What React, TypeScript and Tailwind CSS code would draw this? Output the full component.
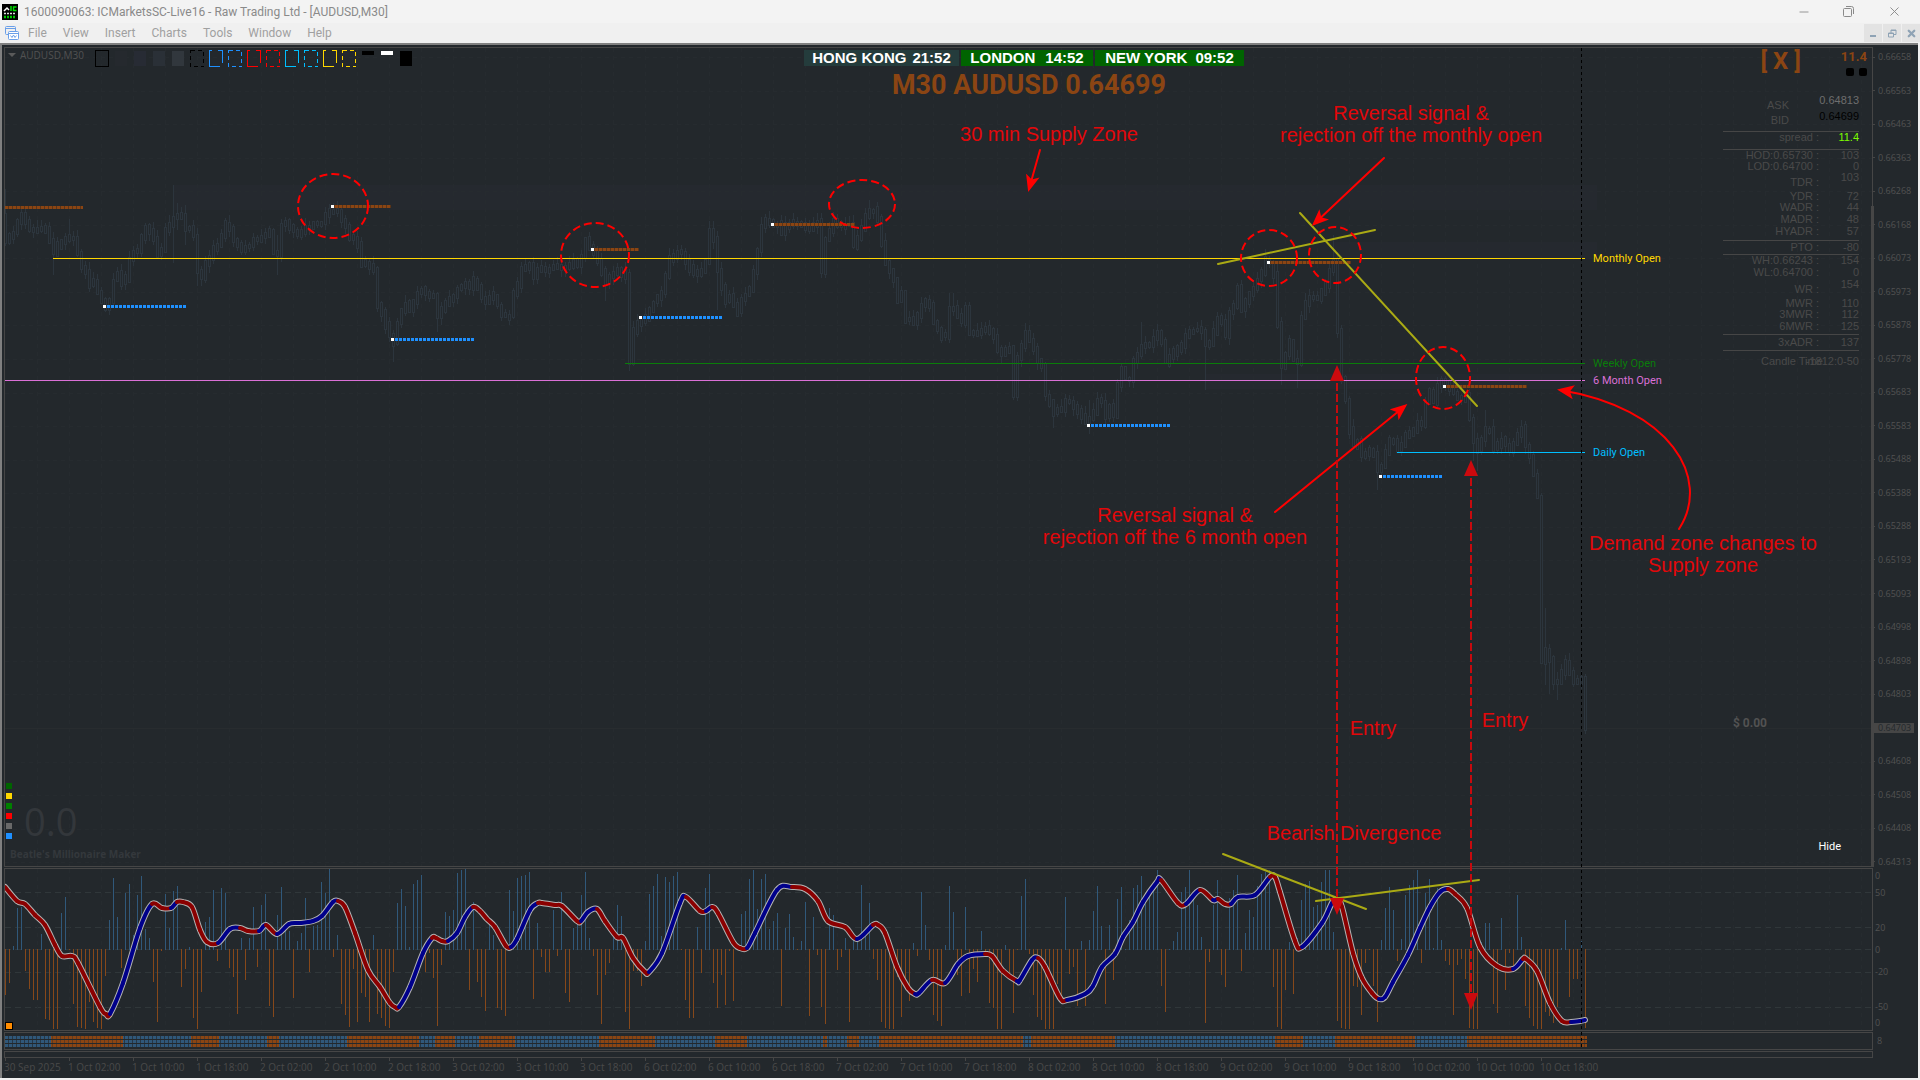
import { useState } from 'react';
import { Minus, X } from 'lucide-react';

const MENU = ['File', 'View', 'Insert', 'Charts', 'Tools', 'Window', 'Help'];

const PRICES = [
    '0.66658', '0.66563', '0.66463', '0.66363', '0.66268', '0.66168', '0.66073', '0.65973', '0.65878',
    '0.65778', '0.65683', '0.65583', '0.65488', '0.65388', '0.65288', '0.65193', '0.65093', '0.64998',
    '0.64898', '0.64803', '0.64703', '0.64608', '0.64508', '0.64408', '0.64313',
];

const DAYS = [1, 2, 3, 6, 7, 8, 9, 10];
const TIMES = ['30 Sep 2025', ...DAYS.flatMap((d) => ['02:00', '10:00', '18:00'].map((t) => `${d} Oct ${t}`))];

const SESSIONS = [
    { city: 'HONG KONG', time: '21:52', style: 'bg-[#243c3c] w-[155px] gap-1.5' },
    { city: 'LONDON', time: '14:52', style: 'bg-[#006400] w-[132px] gap-2.5' },
    { city: 'NEW YORK', time: '09:52', style: 'bg-[#006400] w-[149px] gap-2' },
];

type ToolKind = 'box' | 'fill' | 'dashed' | 'notch' | 'bar' | 'block';
const TOOLS: { name: string; kind: ToolKind; color: string }[] = [
    { name: 'Box', kind: 'box', color: '#000000' },
    { name: 'Zone 1', kind: 'fill', color: '#25292e' },
    { name: 'Zone 2', kind: 'fill', color: '#272b34' },
    { name: 'Zone 3', kind: 'fill', color: '#2a3037' },
    { name: 'Zone 4', kind: 'fill', color: '#31373d' },
    { name: 'Black dashed', kind: 'dashed', color: '#000000' },
    { name: 'Blue', kind: 'notch', color: '#1e90ff' },
    { name: 'Blue dashed', kind: 'dashed', color: '#1e90ff' },
    { name: 'Red', kind: 'notch', color: '#ff0000' },
    { name: 'Red dashed', kind: 'dashed', color: '#ff0000' },
    { name: 'Aqua', kind: 'notch', color: '#00bfff' },
    { name: 'Aqua dashed', kind: 'dashed', color: '#00bfff' },
    { name: 'Gold', kind: 'notch', color: '#ffd700' },
    { name: 'Gold dashed', kind: 'dashed', color: '#ffd700' },
    { name: 'Black line', kind: 'bar', color: '#000000' },
    { name: 'White line', kind: 'bar', color: '#ffffff' },
    { name: 'Black block', kind: 'block', color: '#000000' },
];

// label, value, row classes, label cell classes, value cell classes
const RANGES: [string, string, string, string, string][] = [
    ['ASK', '0.64813', 'h-4', 'align-bottom pr-[30px]', 'align-top text-[#6e6e6e]'],
    ['BID', '0.64699', 'h-5 border-b', 'align-middle pr-[30px]', 'align-top text-black'],
    ['spread :', '11.4', 'h-[18px] border-b', 'align-top', 'align-top text-[#7cfc00]'],
    ['HOD:0.65730 :', '103', 'h-[11px]', '', ''],
    ['LOD:0.64700 :', '0', 'h-[11px]', '', ''],
    ['TDR :', '103', 'h-4', 'align-bottom', 'align-top'],
    ['YDR :', '72', 'h-[14px]', 'align-bottom', 'align-bottom'],
    ['WADR :', '44', 'h-3', '', ''],
    ['MADR :', '48', 'h-3', '', ''],
    ['HYADR :', '57', 'h-[15px] border-b', 'align-top', 'align-top'],
    ['PTO :', '-80', 'h-[14px] border-b', '', ''],
    ['WH:0.66243 :', '154', 'h-3', '', ''],
    ['WL:0.64700 :', '0', 'h-3', '', ''],
    ['WR :', '154', 'h-4', 'align-bottom', 'align-top'],
    ['MWR :', '110', 'h-[14px]', 'align-bottom', 'align-bottom'],
    ['3MWR :', '112', 'h-3', '', ''],
    ['6MWR :', '125', 'h-[14px] border-b', 'align-top', 'align-top'],
    ['3xADR :', '137', 'h-4 border-b', 'align-middle', 'align-middle'],
];

// mid price path, one candle each 4px
const PATH: [number, number][] = [
    [5, 240], [9, 237], [13, 232], [17, 222], [21, 214], [25, 222], [29, 228], [37, 229], [45, 229], [49, 240],
    [53, 252], [57, 245], [61, 242], [65, 238], [73, 239], [77, 253], [81, 268], [85, 272], [89, 284], [93, 281],
    [97, 291], [101, 300], [105, 308], [109, 300], [113, 280], [117, 272], [121, 282], [125, 278], [129, 260],
    [133, 252], [137, 250], [141, 236], [145, 228], [149, 232], [153, 238], [157, 255], [161, 250], [165, 230],
    [169, 226], [173, 218], [177, 215], [181, 216], [185, 228], [189, 228], [193, 235], [197, 270], [201, 277],
    [205, 262], [209, 256], [213, 248], [217, 246], [221, 235], [225, 224], [229, 228], [233, 240], [241, 248],
    [249, 245], [253, 240], [261, 236], [269, 231], [273, 252], [277, 255], [281, 225], [285, 222], [293, 230],
    [297, 234], [305, 228], [313, 224], [321, 222], [325, 215], [329, 210], [333, 212], [337, 210], [341, 220],
    [345, 226], [349, 236], [353, 238], [357, 245], [361, 263], [365, 262], [373, 270], [377, 305], [381, 312],
    [385, 325], [389, 334], [393, 342], [397, 322], [401, 310], [405, 304], [409, 310], [413, 300], [417, 292],
    [421, 290], [429, 296], [433, 296], [437, 315], [441, 310], [445, 302], [453, 295], [457, 288], [461, 286],
    [465, 283], [469, 287], [473, 280], [477, 288], [481, 298], [485, 303], [489, 298], [493, 295], [497, 305],
    [501, 315], [509, 316], [513, 292], [517, 285], [521, 268], [529, 265], [533, 275], [537, 268], [545, 270],
    [557, 266], [565, 268], [573, 262], [577, 265], [581, 255], [585, 240], [589, 248], [593, 252], [597, 260],
    [601, 272], [605, 282], [609, 275], [617, 270], [625, 276], [629, 362], [633, 330], [637, 322], [641, 320],
    [645, 318], [649, 310], [653, 302], [661, 292], [665, 275], [669, 258], [673, 256], [677, 253], [681, 252],
    [685, 262], [689, 268], [693, 274], [701, 270], [705, 262], [709, 230], [713, 240], [717, 270], [721, 288],
    [725, 300], [729, 296], [733, 305], [737, 312], [741, 298], [749, 290], [753, 272], [757, 250], [761, 225],
    [765, 220], [769, 222], [773, 225], [777, 224], [781, 232], [785, 225], [793, 222], [801, 225], [809, 228],
    [817, 222], [821, 270], [825, 240], [829, 230], [833, 222], [841, 225], [849, 225], [853, 245], [857, 238],
    [861, 228], [865, 215], [869, 212], [873, 210], [877, 218], [881, 243], [885, 262], [889, 270], [893, 280],
    [897, 300], [901, 292], [905, 320], [909, 318], [913, 322], [917, 316], [921, 305], [925, 302], [929, 305],
    [933, 322], [941, 336], [945, 335], [949, 308], [953, 308], [957, 315], [961, 322], [965, 308], [969, 332],
    [973, 332], [981, 330], [985, 328], [989, 332], [993, 337], [997, 350], [1001, 354], [1005, 350],
    [1009, 348], [1013, 395], [1017, 356], [1021, 347], [1025, 334], [1029, 340], [1033, 348], [1037, 360],
    [1041, 366], [1045, 395], [1049, 402], [1053, 412], [1061, 410], [1065, 400], [1069, 402], [1077, 411],
    [1085, 420], [1089, 418], [1093, 412], [1097, 400], [1101, 402], [1105, 416], [1109, 406], [1113, 416],
    [1117, 384], [1121, 368], [1125, 378], [1129, 380], [1133, 360], [1137, 354], [1141, 346], [1149, 345],
    [1157, 332], [1161, 342], [1165, 362], [1173, 352], [1181, 345], [1185, 335], [1193, 330], [1201, 330],
    [1205, 345], [1209, 342], [1213, 332], [1217, 318], [1221, 322], [1225, 335], [1229, 312], [1233, 305],
    [1237, 288], [1241, 308], [1245, 300], [1253, 288], [1257, 280], [1261, 272], [1265, 260], [1269, 262],
    [1273, 275], [1277, 325], [1281, 365], [1285, 355], [1289, 342], [1293, 360], [1297, 362], [1301, 318],
    [1305, 302], [1309, 298], [1317, 298], [1325, 285], [1329, 270], [1333, 262], [1337, 330], [1341, 380],
    [1345, 400], [1349, 430], [1353, 445], [1357, 442], [1361, 455], [1365, 455], [1369, 450], [1373, 455],
    [1377, 470], [1381, 466], [1385, 452], [1389, 440], [1393, 440], [1397, 450], [1401, 445], [1405, 435],
    [1413, 430], [1417, 422], [1421, 425], [1425, 402], [1429, 392], [1433, 402], [1437, 385], [1441, 380],
    [1449, 388], [1453, 392], [1457, 398], [1461, 398], [1465, 395], [1469, 418], [1473, 442], [1477, 450],
    [1481, 440], [1485, 430], [1489, 430], [1493, 448], [1501, 440], [1509, 450], [1517, 436], [1521, 428],
    [1525, 445], [1529, 455], [1533, 475], [1537, 496], [1541, 662], [1545, 650], [1549, 660], [1553, 682],
    [1557, 682], [1561, 672], [1565, 662], [1573, 682], [1577, 680], [1581, 678], [1585, 728],
];

const LONG_WICKS: [number, number, number][] = [
    [5, 189, 245], [53, 240, 275], [69, 219, 240], [173, 185, 263], [177, 203, 230], [185, 205, 245],
    [197, 250, 286], [277, 235, 275], [393, 340, 362], [437, 310, 332], [605, 280, 301], [629, 324, 371],
    [713, 221, 240], [717, 265, 310], [869, 200, 220], [949, 293, 310], [953, 293, 310], [1053, 400, 428],
    [1089, 400, 434], [1141, 322, 350], [1205, 330, 390], [1281, 340, 385], [1297, 350, 388],
    [1333, 235, 275], [1377, 465, 490], [1473, 440, 461], [1477, 450, 471], [1485, 410, 430],
    [1545, 608, 685], [1549, 644, 694], [1557, 675, 700],
];

const FRACTALS = [
    { x1: 5, x2: 83, y: 207, up: false, start: false },
    { x1: 103, x2: 186, y: 306, up: true, start: true },
    { x1: 331, x2: 391, y: 206, up: false, start: true },
    { x1: 391, x2: 474, y: 339, up: true, start: true },
    { x1: 591, x2: 639, y: 249, up: false, start: true },
    { x1: 639, x2: 722, y: 317, up: true, start: true },
    { x1: 771, x2: 855, y: 224, up: false, start: true },
    { x1: 1087, x2: 1170, y: 425, up: true, start: true },
    { x1: 1267, x2: 1351, y: 262, up: false, start: true },
    { x1: 1379, x2: 1442, y: 476, up: true, start: true },
    { x1: 1443, x2: 1527, y: 386, up: false, start: true },
];

const LEVELS = [
    { label: 'Monthly Open', x: 53, y: 258, color: '#ffd700' },
    { label: 'Weekly Open', x: 625, y: 363, color: '#0a7d0a' },
    { label: '6 Month Open', x: 5, y: 380, color: '#da70d6' },
    { label: 'Daily Open', x: 1397, y: 452, color: '#00bfff' },
];

const HISTOGRAM = [
    -46, -34, 4, 42, 43, -22, -40, -51, -51, 16, -70, -71, -80, -80, 37, 53, -1, -55, -78, -79, -80, -53, -73, -79,
    -80, -27, 30, 72, 33, -19, 57, 66, 15, 55, 74, 21, 12, -33, -73, -2, 56, 22, 59, 64, -38, -20, 3, -69, -80, -43,
    28, 33, 60, -12, 62, 57, -19, -28, -65, 12, -31, 12, 43, -18, 45, 56, -57, -68, 35, 63, 21, 19, -49, 9, 17, 52,
    -23, 24, 25, 68, 57, 81, -8, 15, -55, -66, -78, -20, -73, -44, -48, -73, 15, -65, -69, -77, -79, -23, 47, 61,
    44, 3, 66, 70, 75, -23, -4, -29, -77, -16, 38, 34, 40, 77, 80, 81, -41, 48, -33,
    -48, -62, 31, 15, -59, -61, -67, 60, 39, 72, 74, 75, 78, -50, 27, -8, -23, -23, 40, -7, 58, -44, -53, 22, 27,
    55, 78, 12, -7, -46, -75, -26, -14, 16, 45, 34, -63, -80, -22, -22, -37, 9, 56, 64, 76, 14, 73, 68, 74, 78, -1,
    -51, -69, -69, 23, -24, 62, 76, -34, -59, -26, -56, -2, -52, 3, 36, 39, 71, 80, 41, 71, 76, 21, 29, 37, -57, 22,
    36, 13, -1, 9, 48, -67, 33, -6, -58, -75, 42, 35, -21, -8, 12, -73, 13, 11, 65, 18, 47, -10, -31, -73, -79, -80,
    -80, -28, -68, -36, -52, 7, -7, 58, 25, -11, -66, -72, -77, 5, 64, 38, -26,
    -47, 43, -44, -20, -33, 19, -5, -54, -59, -80, -80, 5, -29, -64, -1, 54, 71, -5, -46, -68, -71, -80, -80, -80,
    -35, -47, 53, -25, -18, -57, 9, -57, 10, 39, 64, 24, -55, 25, -31, 51, 63, 1, 30, 62, 65, 74, 50, 55, 60, 80,
    -37, -63, 1, 9, 18, 58, 63, 80, 50, 45, 13, -74, -13, 45, 70, -26, -38, 52, 60, 75, -22, 17, 40, 33, 64, 76, 78,
    80, -38, -78, -80, -41, 8, -45, 12, 50, 66, 69, 43, 45, 68, 80, 80, 18, -72, -79, -80, -80, -37, -38, -66, -14,
    -1, -37, -73, 10, 42, 63, 40, -12, 11, 55, 65, 70, 80, -14, 57, 71, 2, 62,
    10, -12, -16, -66, -16, -10, -30, -79, -80, -80, 8, 27, 27, -55, -64, 32, -41, -4, -19, 55, 13, -57, -69, -77,
    -80, -80, -63, -67, -74, -58, 2, 30, -48, -30, -30, 9, -79,
];

const WAVE: [number, number][] = [
    [5, 887], [17, 901], [25, 904], [35, 915], [45, 925], [55, 945], [62, 956], [72, 956], [78, 963], [100, 1007],
    [106, 1014], [110, 1014], [123, 983], [140, 928], [152, 904], [162, 908], [171, 908], [177, 902], [183, 902],
    [192, 907], [200, 930], [207, 942], [218, 943], [230, 929], [240, 928], [248, 931], [259, 931], [266, 925],
    [277, 934], [289, 924], [300, 923], [313, 921], [322, 916], [333, 902], [338, 901], [345, 907], [355, 933],
    [368, 970], [380, 987], [390, 1003], [395, 1007], [399, 1007], [410, 987], [423, 953], [432, 938], [436, 938],
    [442, 941], [448, 941], [457, 933], [465, 917], [473, 907], [480, 911], [487, 919], [495, 927], [506, 946],
    [511, 947], [517, 939], [530, 910], [538, 903], [542, 903], [555, 905], [562, 906], [577, 921], [581, 921],
    [588, 912], [597, 909], [605, 921], [617, 937], [623, 938], [633, 958], [645, 972], [649, 972], [662, 953],
    [680, 903], [686, 897], [700, 911], [706, 911], [712, 907], [718, 913], [733, 942], [740, 948], [747, 948],
    [755, 933], [777, 890], [792, 887], [805, 889], [818, 901], [828, 921], [845, 927], [857, 939], [873, 925],
    [878, 925], [885, 933], [897, 967], [908, 988], [915, 994], [919, 993], [932, 980], [945, 983], [958, 964],
    [968, 956], [985, 954], [992, 956], [1003, 971], [1017, 981], [1020, 980], [1032, 960], [1038, 958],
    [1045, 967], [1060, 998], [1067, 1000], [1085, 994], [1093, 986], [1102, 967], [1115, 954], [1123, 937],
    [1133, 922], [1143, 902], [1157, 882], [1161, 880], [1178, 903], [1186, 904], [1200, 890], [1213, 900],
    [1218, 899], [1225, 904], [1231, 904], [1238, 897], [1255, 895], [1270, 877], [1275, 877], [1280, 892],
    [1295, 941], [1302, 947], [1322, 923], [1332, 903], [1337, 900], [1342, 907], [1353, 953], [1362, 978],
    [1372, 993], [1379, 999], [1385, 997], [1393, 982], [1408, 955], [1420, 928], [1430, 907], [1440, 892],
    [1448, 889], [1455, 894], [1467, 908], [1480, 947], [1497, 966], [1513, 969], [1523, 959], [1526, 959],
    [1537, 971], [1550, 1003], [1562, 1021], [1571, 1022], [1580, 1021], [1585, 1020],
];

const BEAR_RUNS: [number, number][] = [
    [51, 123], [191, 219], [267, 279], [347, 419], [435, 455], [479, 515], [599, 655], [715, 747], [823, 827],
    [847, 859], [879, 1023], [1031, 1115], [1275, 1303], [1335, 1415], [1467, 1587],
];

const CIRCLES = [
    [333, 206, 35, 32], [595, 255, 34, 32], [862, 204, 33, 24], [1269, 258, 28, 28], [1335, 255, 26, 28], [1443, 378, 27, 31],
];

const OSC_LABELS = [
    { text: '0', top: 3 }, { text: '50', top: 20 }, { text: '20', top: 55 }, { text: '0', top: 77 },
    { text: '-20', top: 99 }, { text: '-50', top: 134 }, { text: '0', top: 150 },
];

const SWATCHES = ['bg-[#006400]', 'bg-[#ffd700]', 'bg-[#008000]', 'bg-[#ff0000]', 'bg-[#696969]', 'bg-[#1e90ff]'];

const GRID_X = Array.from({ length: 58 }, (_, i) => 37 + i * 32);

function priceAt(x: number) {
    const i = PATH.findIndex((p) => p[0] >= x);
    if (i <= 0) return PATH[0][1];
    const [x0, y0] = PATH[i - 1];
    const [x1, y1] = PATH[i];
    return y0 + ((y1 - y0) * (x - x0)) / (x1 - x0);
}

// small repeatable noise so the candles keep their shape between renders
function noise(n: number) {
    const v = Math.sin(n * 12.9898) * 43758.5453;
    return v - Math.floor(v);
}

const CANDLES = Array.from({ length: 396 }, (_, i) => {
    const x = 5 + i * 4;
    const open = i === 0 ? 214 : priceAt(x - 4);
    const close = priceAt(x);
    const top = Math.round(Math.min(open, close) - noise(i) * 3 - 1);
    const bottom = Math.round(Math.max(open, close) + noise(i + 500) * 3 + 1);
    return { x, top, bottom, high: top - Math.round(noise(i + 900) * 7), low: bottom + Math.round(noise(i + 1300) * 7) };
});

function waveSegment(i: number) {
    const p0 = WAVE[Math.max(i - 1, 0)];
    const p1 = WAVE[i];
    const p2 = WAVE[i + 1];
    const p3 = WAVE[Math.min(i + 2, WAVE.length - 1)];
    const c1 = [p1[0] + (p2[0] - p0[0]) / 6, p1[1] + (p2[1] - p0[1]) / 6];
    const c2 = [p2[0] - (p3[0] - p1[0]) / 6, p2[1] - (p3[1] - p1[1]) / 6];
    return `M${p1[0]} ${p1[1]}C${c1[0]} ${c1[1]} ${c2[0]} ${c2[1]} ${p2[0]} ${p2[1]}`;
}

const WAVE_SEGMENTS = WAVE.slice(0, -1).map((p, i) => ({ d: waveSegment(i), falling: WAVE[i + 1][1] >= p[1] }));

function ToolIcon({ kind, color }: { kind: ToolKind; color: string }) {
    return (
        <svg className="block" width="14" height="17" fill="none" stroke={color} shapeRendering="crispEdges">
            {kind === 'box' && <rect x="0.5" y="0.5" width="13" height="16" />}
            {kind === 'dashed' && <rect x="0.5" y="0.5" width="13" height="16" strokeDasharray="4 3" />}
            {kind === 'notch' && <path d="M3 .5H.5V16.5H11M9 .5H13.5V13" />}
            {kind === 'fill' && <rect x="1" y="1" width="12" height="15" fill={color} stroke="none" />}
            {kind === 'bar' && <rect x="1" y="1" width="12" height="4" fill={color} stroke="none" />}
            {kind === 'block' && <rect x="1" y="1" width="12" height="15" fill={color} stroke="none" />}
        </svg>
    );
}

function TitleBar() {
    return (
        <header className="flex h-[23px] items-center bg-[#f3f3f3] pl-0.5 text-[#8a8a8a]">
            <svg width="16" height="16" className="mr-1.5">
                <rect width="16" height="16" fill="#000" />
                <path d="M2 7l3-3 2 2" stroke="#fff" strokeWidth="1.5" fill="none" />
                <path d="M9 2v5M14.500 3h-3v3.500h3" stroke="#00e000" strokeWidth="1.5" fill="none" />
                <path d="M2 9.500h12" stroke="#ddd" strokeWidth="1.5" strokeDasharray="2 1" />
                <path d="M2 13h12" stroke="#00c800" strokeWidth="2.500" strokeDasharray="2 1" />
            </svg>
            <h1 className="font-['Roboto',sans-serif] text-[12px]">1600090063: ICMarketsSC-Live16 - Raw Trading Ltd - [AUDUSD,M30]</h1>
            <div className="ml-auto flex items-center pr-[3px]">
                <button type="button" aria-label="Minimize" className="flex w-[45px] justify-center">
                    <Minus size={14} strokeWidth={1.5} />
                </button>
                <button type="button" aria-label="Restore" className="flex w-[45px] justify-center">
                    <svg width="11" height="11" fill="none" stroke="currentColor">
                        <rect x="0.5" y="2.5" width="8" height="8" rx="1" />
                        <path d="M3 .5h5.500a2 2 0 0 1 2 2V8" />
                    </svg>
                </button>
                <button type="button" aria-label="Close" className="flex w-[46px] justify-center">
                    <X size={15} strokeWidth={1.5} />
                </button>
            </div>
        </header>
    );
}

function MenuBar() {
    return (
        <nav className="flex h-5 items-center bg-[#f0f0f0] pl-1 font-['Roboto',sans-serif] text-[12px] text-[#a0a0a0]">
            <svg width="16" height="16" className="mr-1.5" fill="none" stroke="#6a9fe8">
                <rect x="1.5" y="1.5" width="10" height="8" rx="1" />
                <path d="M1.500 3.500h10" />
                <rect x="4.500" y="6.500" width="10" height="8" rx="1" fill="#fff" />
                <path d="M4.500 8.500h10M6.500 10.500l1.500 2 1.500-2.500 1.500 2.500 1.500-2" />
            </svg>
            {MENU.map((item) => (
                <button key={item} type="button" className="mr-3 px-0.5">
                    {item}
                </button>
            ))}
            <div className="ml-auto flex gap-px text-[#8fa3b5]">
                <button type="button" aria-label="Minimize chart" className="flex h-[18px] w-[18px] items-center justify-center bg-[#e3e3e3]">
                    <svg width="8" height="8">
                        <path d="M1 7h6" stroke="currentColor" strokeWidth="2" />
                    </svg>
                </button>
                <button type="button" aria-label="Restore chart" className="flex h-[18px] w-[18px] items-center justify-center bg-[#e3e3e3]">
                    <svg width="9" height="9" fill="none" stroke="currentColor">
                        <path d="M.5 4h5v4h-5zM3 4V1h5v4.500H6M.5 4.500h5M3 1.500h5" />
                    </svg>
                </button>
                <button type="button" aria-label="Close chart" className="flex h-[18px] w-[18px] items-center justify-center bg-[#e3e3e3]">
                    <X size={11} strokeWidth={5} />
                </button>
            </div>
        </nav>
    );
}

function PriceChart() {
    return (
        <svg className="absolute inset-0 h-full w-full" shapeRendering="crispEdges" aria-label="AUDUSD M30 price">
            <g transform="translate(-5 -48)">
                <rect x="173" y="185" width="1424" height="25" fill="#25292f" />
                <rect x="1333" y="242" width="264" height="17" fill="#25292f" />
                <rect x="1205" y="374" width="392" height="15" fill="#25292f" />
                <g stroke="#262b2f" strokeDasharray="4 4">
                    {GRID_X.map((x) => (
                        <path key={x} d={`M${x}.5 48V866`} />
                    ))}
                    {PRICES.map((p, i) => (
                        <path key={p} d={`M5 ${Math.round(57 + i * 33.55)}.5H1872`} />
                    ))}
                </g>
                <path d="M5 728.500H1872" stroke="#282c2f" />
                <g stroke="#2c353d" fill="#23282c">
                    {LONG_WICKS.map(([x, y1, y2]) => (
                        <path key={x} d={`M${x}.5 ${y1}V${y2}`} />
                    ))}
                    {CANDLES.map((c) => (
                        <g key={c.x}>
                            <path d={`M${c.x}.5 ${c.high}V${c.low}`} />
                            <rect x={c.x - 0.5} y={c.top + 0.5} width="2" height={c.bottom - c.top} />
                        </g>
                    ))}
                </g>
                {FRACTALS.map((f) => (
                    <g key={f.x1} strokeWidth="3">
                        {!f.up && <path d={`M${f.x1} ${f.y}.5H${f.x2}`} stroke="#5a3418" />}
                        <path d={`M${f.x1} ${f.y}.5H${f.x2}`} stroke={f.up ? '#1e90ff' : '#8b4513'} strokeDasharray="3 1" />
                        {f.start && <path d={`M${f.x1} ${f.y}.5h3`} stroke="#ffffff" />}
                    </g>
                ))}
                {LEVELS.map((l) => (
                    <g key={l.label}>
                        <path d={`M${l.x} ${l.y}.5H1585`} stroke={l.color} />
                        <text x="1593" y={l.y + 4} fill={l.color} className="font-['Roboto',sans-serif] text-[11px]">
                            {l.label}
                        </text>
                    </g>
                ))}
            </g>
        </svg>
    );
}

function Oscillator() {
    return (
        <svg className="absolute inset-0 h-full w-full" aria-label="Oscillator">
            <g transform="translate(-5 -869)">
                <g stroke="#30373a" strokeDasharray="6 4" shapeRendering="crispEdges">
                    {[892, 927, 949, 972, 1007].map((y) => (
                        <path key={y} d={`M5 ${y}.5H1872`} />
                    ))}
                </g>
                <g stroke="#262b2f" strokeDasharray="4 4" shapeRendering="crispEdges">
                    {GRID_X.map((x) => (
                        <path key={x} d={`M${x}.5 869V1030`} />
                    ))}
                </g>
                <g shapeRendering="crispEdges">
                    {HISTOGRAM.map((v, i) => (
                        <path key={i} d={`M${5 + i * 4}.5 ${v > 0 ? 950 : 949}v${-v}`} stroke={v > 0 ? '#30587a' : '#86481a'} />
                    ))}
                </g>
                <path d={WAVE_SEGMENTS.map((s) => s.d).join('')} fill="none" stroke="#b4b4b4" strokeWidth="6" strokeLinecap="round" />
                <g fill="none" strokeWidth="4" strokeLinecap="round">
                    {WAVE_SEGMENTS.map((s) => (
                        <path key={s.d} d={s.d} stroke={s.falling ? '#8b0000' : '#00008b'} />
                    ))}
                </g>
            </g>
        </svg>
    );
}

function TrendStrip() {
    return (
        <svg className="absolute inset-0 h-full w-full" shapeRendering="crispEdges" aria-label="Trend strip">
            <g transform="translate(-5 -1033)">
                {[1037, 1041, 1045].map((y) => (
                    <g key={y} strokeWidth="3">
                        <path d={`M5 ${y}.5H1587`} stroke="#30587a" />
                        {BEAR_RUNS.map(([a, b]) => (
                            <path key={a} d={`M${a} ${y}.5H${b}`} stroke="#8b4513" />
                        ))}
                        <path d={`M8 ${y}.5H1587`} stroke="#263746" strokeDasharray="1 3" />
                        {BEAR_RUNS.map(([a, b]) => (
                            <path key={a} d={`M${a + 1} ${y}.5H${b}`} stroke="#5e3a20" strokeDasharray="1 3" />
                        ))}
                    </g>
                ))}
            </g>
        </svg>
    );
}

function Annotations() {
    return (
        <svg className="pointer-events-none absolute inset-0 h-full w-full">
            <defs>
                <marker id="barb" markerUnits="userSpaceOnUse" markerWidth="18" markerHeight="14" refX="14" refY="7" orient="auto">
                    <path d="M0 0L17 7L0 14L4 7Z" fill="#ff0000" />
                </marker>
            </defs>
            <g transform="translate(-2 -45)" fill="none">
                <path d="M1581.500 48V1047" stroke="#000" strokeDasharray="3 3" shapeRendering="crispEdges" />
                <g stroke="#aaaa14" strokeWidth="2" strokeLinecap="round">
                    <path d="M1218 264L1375 230M1300 213L1477 406M1223 854L1366 909M1316 901L1479 880" />
                </g>
                <g stroke="#ff0000" strokeWidth="2" strokeDasharray="8 4">
                    {CIRCLES.map(([cx, cy, rx, ry]) => (
                        <ellipse key={cx} cx={cx} cy={cy} rx={rx} ry={ry} />
                    ))}
                </g>
                <g stroke="#ff0000" strokeWidth="2" strokeLinecap="round">
                    <path d="M1040 150L1029 189" markerEnd="url(#barb)" />
                    <path d="M1384 158L1314 224" markerEnd="url(#barb)" />
                    <path d="M1275 512L1405 406" markerEnd="url(#barb)" />
                    <path d="M1679 529C1712 478 1670 408 1560 390" markerEnd="url(#barb)" />
                </g>
                <g stroke="#c80a0e" strokeWidth="2" strokeDasharray="8 3">
                    <path d="M1337 383V898M1471 478V993" />
                </g>
                <g fill="#cc0a0e">
                    <path d="M1337 365l7 16h-14zM1337 915l7-17h-14zM1471 460l7 16h-14zM1471 1010l7-17h-14z" />
                </g>
                <g fill="#e2070a" textAnchor="middle" className="font-['Liberation_Sans',sans-serif] text-[20px]">
                    <text x="1049" y="141">30 min Supply Zone</text>
                    <text x="1411" y="120">Reversal signal &amp;</text>
                    <text x="1411" y="142">rejection off the monthly open</text>
                    <text x="1175" y="522">Reversal signal &amp;</text>
                    <text x="1175" y="544">rejection off the 6 month open</text>
                    <text x="1703" y="550">Demand zone changes to</text>
                    <text x="1703" y="572">Supply zone</text>
                    <text x="1373" y="735">Entry</text>
                    <text x="1505" y="727">Entry</text>
                    <text x="1354" y="840">Bearish Divergence</text>
                </g>
            </g>
        </svg>
    );
}

function RangePanel() {
    return (
        <div className="absolute top-[47px] right-[13px] w-[136px] font-['Liberation_Sans',sans-serif] text-[11px] text-[#4a4a4a]">
            <table className="w-full border-collapse leading-[11px]">
                <tbody>
                    {RANGES.map(([label, value, row, labelCell, valueCell]) => (
                        <tr key={label} className={`border-[#464646] ${row}`}>
                            <th scope="row" className={`p-0 text-right font-normal whitespace-nowrap ${labelCell}`}>{label}</th>
                            <td className={`w-10 p-0 text-right ${valueCell}`}>{value}</td>
                        </tr>
                    ))}
                </tbody>
            </table>
            <p className="relative mt-1 pl-[38px] leading-3 whitespace-nowrap">
                Candle Time
                <span className="absolute right-0">-1812:0-50</span>
            </p>
        </div>
    );
}

function Pane({ className, children, axis }: { className: string; children?: React.ReactNode; axis?: React.ReactNode }) {
    return (
        <div className={`flex ${className}`}>
            <div className="relative min-w-0 flex-1 overflow-hidden border border-[#464646]">{children}</div>
            <div className="relative flex w-[45px] shrink-0 flex-col">{axis}</div>
        </div>
    );
}

export default function App() {
    const [panelOpen, setPanelOpen] = useState(true);

    return (
        <div className="flex min-h-screen flex-col bg-[#f0f0f0] font-['Open_Sans','Noto_Sans',sans-serif]">
            <TitleBar />
            <MenuBar />

            <main className="relative mr-0.5 mb-0.5 flex flex-1 flex-col gap-px border-t-2 border-l-2 border-[#808080] bg-[#23282c] pt-0.5 pl-0.5 text-[9px] text-[#525252]">
                <Pane
                    className="min-h-[500px] flex-1"
                    axis={
                        <>
                            <div className="absolute top-[159px] bottom-0 -left-[2px] w-[3px] bg-[#464646]" />
                            <ul className="flex flex-1 flex-col justify-between pt-[5px] leading-[10px]">
                                {PRICES.map((p) => (
                                    <li key={p} className={`flex items-center gap-[3px] ${p === '0.64703' ? 'mr-1 bg-[#464646] text-[#23282c]' : ''}`}>
                                        <span className="h-px w-0.5 bg-[#464646]" />
                                        {p}
                                    </li>
                                ))}
                            </ul>
                        </>
                    }
                >
                    <PriceChart />
                    <div className="absolute top-0.5 left-[3px] flex items-start">
                        <div className="flex w-[87px] items-center gap-1 text-[10px] leading-[10px]">
                            <svg width="8" height="4">
                                <path d="M0 0h8L4 4z" fill="#5a5a5a" />
                            </svg>
                            AUDUSD,M30
                        </div>
                        <div className="flex gap-[5px]">
                            {TOOLS.map((t) => (
                                <button key={t.name} type="button" aria-label={t.name}>
                                    <ToolIcon kind={t.kind} color={t.color} />
                                </button>
                            ))}
                        </div>
                    </div>

                    {/* session clocks and the symbol headline */}
                    <div className="absolute top-0.5 left-[799px] flex flex-col items-center font-bold">
                        <ul className="flex gap-0.5 font-['Liberation_Sans',sans-serif] text-[15px] leading-4 text-white">
                            {SESSIONS.map((s) => (
                                <li key={s.city} className={`flex justify-center ${s.style}`}>
                                    <span>{s.city}</span>
                                    <time>{s.time}</time>
                                </li>
                            ))}
                        </ul>
                        <h2 className="mt-[3px] pl-2.5 font-['Roboto',sans-serif] text-[27px] leading-8 text-[#8b4513]">M30 AUDUSD 0.64699</h2>
                    </div>

                    <div className="absolute top-0 right-[5px] flex items-start gap-10 font-['Roboto',sans-serif] font-bold text-[#8b4513]">
                        <button type="button" className="text-[24px] leading-[26px]" onClick={() => setPanelOpen(!panelOpen)}>
                            [ X ]
                        </button>
                        <div className="flex flex-col items-end gap-1 pt-0.5 text-[13px] leading-[14px]">
                            11.4
                            <div className="flex gap-[5px]">
                                <span className="h-2 w-2 rounded-[2px] bg-black" />
                                <span className="h-2 w-2 rounded-[2px] bg-black" />
                            </div>
                        </div>
                    </div>

                    {panelOpen && <RangePanel />}

                    <p className="absolute right-[105px] bottom-[135px] font-['Roboto',sans-serif] text-[12px] leading-4 font-bold">$ 0.00</p>
                    <button type="button" className="absolute right-[31px] bottom-[11px] font-['Roboto',sans-serif] text-[11px] leading-4 text-white">
                        Hide
                    </button>

                    <div className="absolute bottom-[27px] left-px flex items-end gap-3">
                        <div className="flex flex-col gap-1">
                            {SWATCHES.map((s) => (
                                <span key={s} className={`h-1.5 w-1.5 ${s}`} />
                            ))}
                        </div>
                        <p className="mb-0.5 text-[38px] leading-8 text-[#33373b]">0.0</p>
                    </div>
                    <p className="absolute bottom-1 left-[5px] text-[10px] leading-4 font-bold text-[#34383c]">Beatle's Millionaire Maker</p>
                </Pane>

                <Pane
                    className="h-[163px]"
                    axis={OSC_LABELS.map((l) => (
                        <span key={l.top} className="absolute left-0.5 leading-[10px]" style={{ top: l.top }}>
                            {l.text}
                        </span>
                    ))}
                >
                    <Oscillator />
                    <span className="absolute bottom-0 left-0 h-2 w-2 border border-black bg-[#ff8c00]" />
                </Pane>

                <Pane className="h-[18px]" axis={<span className="pt-1 pl-1 leading-[10px]">8</span>}>
                    <TrendStrip />
                </Pane>

                <div>
                    <Pane className="h-[7px]" />
                    <ol className="flex h-5 overflow-hidden text-[10px] text-[#4a4a4a]">
                        {TIMES.map((t) => (
                            <li key={t} className="w-16 shrink-0 leading-3 whitespace-nowrap">
                                <span className="ml-px block h-[3px] w-px bg-[#464646]" />
                                {t}
                            </li>
                        ))}
                    </ol>
                </div>

                <Annotations />
            </main>
        </div>
    );
}
